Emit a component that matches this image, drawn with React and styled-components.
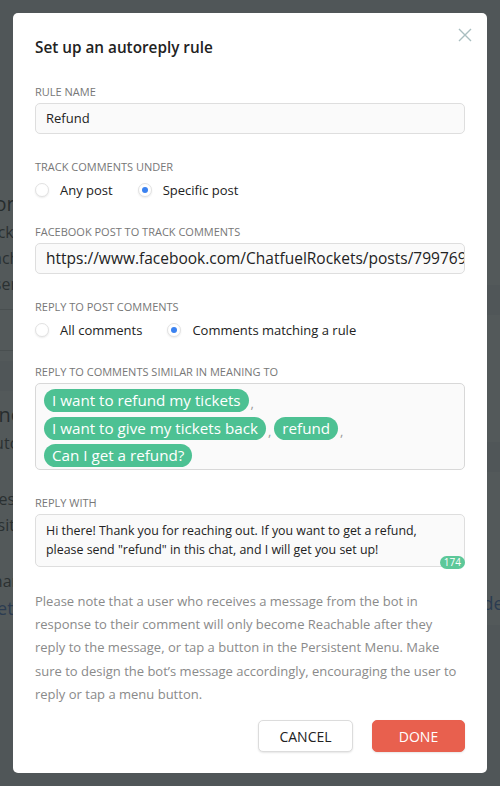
import styled, { createGlobalStyle } from "styled-components";

const GlobalStyle = createGlobalStyle`
  html, body { margin: 0; padding: 0; }
  body {
    width: 500px;
    height: 786px;
    overflow: hidden;
    font-family: "Open Sans", "Liberation Sans", sans-serif;
    background: #eef1f2;
  }
`;

const chips = [
   "I want to refund my tickets",
   "I want to give my tickets back",
   "refund",
   "Can I get a refund?",
];

const note =
   "Please note that a user who receives a message from the bot in response to their comment will only become Reachable after they reply to the message, or tap a button in the Persistent Menu. Make sure to design the bot\u2019s message accordingly, encouraging the user to reply or tap a menu button.";

const CloseIcon = () => (
   <svg width="14" height="14" viewBox="0 0 14 14">
      <path d="M1 1 L13 13 M13 1 L1 13" stroke="#a9bec0" strokeWidth="1.4" fill="none" />
   </svg>
);

const Radio = ({ checked, label }) => (
   <RadioItem>
      <RadioCircle $checked={checked} />
      <span>{label}</span>
   </RadioItem>
);

const App = () => {
   return (
      <>
         <GlobalStyle />
         <Page>
            <BgColumn>
               <BgCard>
                  <BgTitle>Lorem D</BgTitle>
                  <BgText>Pick a post and watch</BgText>
                  <BgText>each comment reach</BgText>
                  <BgText>user here</BgText>
                  <BgBox />
               </BgCard>
               <BgCard>
                  <BgTitle>Une (</BgTitle>
                  <BgText>Auto reply</BgText>
                  <BgSpacer />
                  <BgText>Message</BgText>
                  <BgText>Visit</BgText>
                  <BgSpacer />
                  <BgText>Than y</BgText>
                  <BgLink>Get g</BgLink>
               </BgCard>
            </BgColumn>
            <BgColumn $right>
               <BgCard>
                  <BgTitle>Form</BgTitle>
                  <BgText>Convert</BgText>
                  <BgText>user er</BgText>
                  <BgText>into</BgText>
               </BgCard>
               <BgCard>
                  <BgTitle>U</BgTitle>
                  <BgText>Facebo</BgText>
                  <BgText>the</BgText>
                  <BgLink>Join</BgLink>
               </BgCard>
               <BgCard>
                  <BgTitle>a</BgTitle>
                  <BgText>Join</BgText>
                  <BgText>Boo</BgText>
                  <BgText>a</BgText>
                  <BgLink>Get a code for your</BgLink>
               </BgCard>
            </BgColumn>
         </Page>

         <Overlay>
            <Modal>
               <CloseButton>
                  <CloseIcon />
               </CloseButton>
               <Title>Set up an autoreply rule</Title>

               <Body>
                  <Field>
                     <Label>Rule name</Label>
                     <Input $size="13px">Refund</Input>
                  </Field>

                  <Field>
                     <Label>Track comments under</Label>
                     <RadioRow>
                        <Radio label="Any post" />
                        <Radio label="Specific post" checked />
                     </RadioRow>
                  </Field>

                  <Field>
                     <Label>Facebook post to track comments</Label>
                     <Input $size="15.5px">https://www.facebook.com/ChatfuelRockets/posts/799769</Input>
                  </Field>

                  <Field>
                     <Label>Reply to post comments</Label>
                     <RadioRow>
                        <Radio label="All comments" />
                        <Radio label="Comments matching a rule" checked />
                     </RadioRow>
                  </Field>

                  <Field>
                     <Label>Reply to comments similar in meaning to</Label>
                     <ChipBox>
                        {chips.map((c, i) => (
                           <ChipGroup key={c}>
                              <Chip>{c}</Chip>
                              {i < chips.length - 1 && <Comma>,</Comma>}
                           </ChipGroup>
                        ))}
                     </ChipBox>
                  </Field>

                  <Field>
                     <Label>Reply with</Label>
                     <TextArea>
                        Hi there! Thank you for reaching out. If you want to get a refund,
                        please send "refund" in this chat, and I will get you set up!
                        <Counter>174</Counter>
                     </TextArea>
                  </Field>
               </Body>

               <Note>{note}</Note>

               <Footer>
                  <Button>CANCEL</Button>
                  <Button $primary>DONE</Button>
               </Footer>
            </Modal>
         </Overlay>
      </>
   );
};

export default App;

const Page = styled.div`
display: flex;
justify-content: space-between;
height: 786px;
overflow: hidden;
`;

const BgColumn = styled.div`
display: flex;
flex-direction: column;
gap: 30px;
width: 200px;
padding-top: ${(p) => (p.$right ? "160px" : "180px")};
margin-left: ${(p) => (p.$right ? "0" : "-30px")};
margin-right: ${(p) => (p.$right ? "-100px" : "0")};
`;

const BgCard = styled.div`
background: #ffffff;
padding: 10px 14px;
display: flex;
flex-direction: column;
gap: 4px;
`;

const BgTitle = styled.div`
font-size: 20px;
color: #222;
`;

const BgText = styled.div`
font-size: 16px;
color: #333;
`;

const BgLink = styled.div`
font-size: 18px;
color: #3a6fd0;
`;

const BgSpacer = styled.div`
height: 26px;
`;

const BgBox = styled.div`
height: 40px;
border: 1px solid #ccc;
border-radius: 4px;
margin-top: 10px;
`;

const Overlay = styled.div`
position: fixed;
inset: 0;
background: rgba(40, 48, 49, 0.8);
display: flex;
padding: 13px;
box-sizing: border-box;
`;

const Modal = styled.div`
position: relative;
width: 474px;
height: 760px;
box-sizing: border-box;
background: #ffffff;
border-radius: 5px;
padding: 23px 22px 21px;
display: flex;
flex-direction: column;
`;

const CloseButton = styled.div`
position: absolute;
top: 15px;
right: 15px;
width: 14px;
height: 14px;
display: flex;
`;

const Title = styled.h1`
margin: 0 0 27px;
font-size: 15.3px;
line-height: 22px;
font-weight: 600;
color: #222;
`;

const Body = styled.div`
display: flex;
flex-direction: column;
gap: 25.5px;
`;

const Field = styled.div`
display: flex;
flex-direction: column;
`;

const Label = styled.div`
font-size: 11px;
line-height: 14px;
text-transform: uppercase;
color: #777;
margin-bottom: 4px;
`;

const Input = styled.div`
height: 31px;
box-sizing: border-box;
border: 1px solid #dedede;
border-radius: 5px;
background: #fafafa;
padding: 0 10px;
font-size: ${(p) => p.$size};
line-height: 29px;
color: #222;
white-space: nowrap;
overflow: hidden;
`;

const RadioRow = styled.div`
display: flex;
align-items: center;
gap: 25px;
height: 20px;
margin-top: 2px;
`;

const RadioItem = styled.label`
display: flex;
align-items: center;
gap: 11px;
font-size: 13px;
color: #222;
`;

const RadioCircle = styled.span`
position: relative;
width: 14px;
height: 14px;
box-sizing: border-box;
border-radius: 50%;
border: 1px solid #e2e2e2;
background: #fff;
box-shadow: 0 1px 2px rgba(0, 0, 0, 0.08);

&::after {
   content: "";
   display: ${(p) => (p.$checked ? "block" : "none")};
   position: absolute;
   top: 3px;
   left: 3px;
   width: 6px;
   height: 6px;
   border-radius: 50%;
   background: #3b82f0;
}
`;

const ChipBox = styled.div`
height: 87px;
box-sizing: border-box;
border: 1px solid #d8d8d8;
border-radius: 5px;
background: #fafafa;
padding: 5px 8px;
display: flex;
flex-wrap: wrap;
align-content: flex-start;
row-gap: 4.5px;
`;

const ChipGroup = styled.span`
display: flex;
align-items: flex-end;
`;

const Chip = styled.span`
height: 23px;
line-height: 23px;
padding: 0 8px;
border-radius: 12px;
background: #4dc193;
color: #fff;
font-size: 15.2px;
white-space: nowrap;
`;

const Comma = styled.span`
font-size: 13px;
color: #999;
padding: 0 3px 0 2px;
line-height: 18px;
`;

const TextArea = styled.div`
position: relative;
height: 53px;
box-sizing: border-box;
border: 1px solid #dedede;
border-radius: 5px;
background: #fafafa;
padding: 6px 24px 6px 10px;
font-size: 12.4px;
line-height: 19px;
color: #222;
`;

const Counter = styled.span`
position: absolute;
right: -1px;
bottom: -3px;
height: 13px;
padding: 0 4px;
border-radius: 7px;
background: #5cc899;
color: #fff;
font-size: 10px;
line-height: 13px;
`;

const Note = styled.p`
margin: 23.5px 0 0;
font-size: 13px;
line-height: 23.2px;
color: #8a8a8a;
`;

const Footer = styled.div`
display: flex;
justify-content: flex-end;
gap: 19px;
margin-top: auto;
`;

const Button = styled.div`
height: 32px;
box-sizing: border-box;
width: ${(p) => (p.$primary ? "93px" : "95px")};
border-radius: 5px;
display: flex;
align-items: center;
justify-content: center;
font-size: 14px;
color: ${(p) => (p.$primary ? "#fff" : "#222")};
background: ${(p) => (p.$primary ? "#e8604e" : "#fff")};
border: 1px solid ${(p) => (p.$primary ? "#e8604e" : "#dcdcdc")};
box-shadow: 0 1px 2px rgba(0, 0, 0, 0.1);
`;
